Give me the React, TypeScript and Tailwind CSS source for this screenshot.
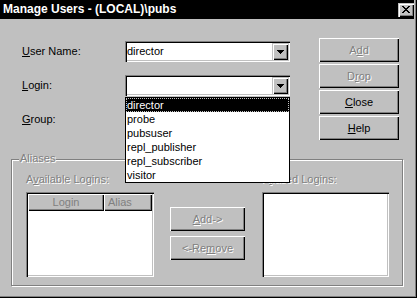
import React from "react";

const raised =
  "shadow-[inset_1px_1px_0_#fff,inset_-1px_-1px_0_#000,inset_-2px_-2px_0_#808080]";
const sunken =
  "shadow-[inset_1px_1px_0_#808080,inset_2px_2px_0_#000,inset_-1px_-1px_0_#fff,inset_-2px_-2px_0_#c0c0c0]";
const scrollBtn =
  "shadow-[inset_1px_1px_0_#c0c0c0,inset_2px_2px_0_#fff,inset_-1px_-1px_0_#000,inset_-2px_-2px_0_#808080]";
const disabled = "text-[#808080] [text-shadow:1px_1px_0_#fff]";

function Btn({
  children,
  off,
  className = "",
}: {
  children: React.ReactNode;
  off?: boolean;
  className?: string;
}) {
  return (
    <div
      className={`flex items-center justify-center bg-[#c0c0c0] leading-[13px] ${raised} ${
        off ? disabled : "text-black"
      } ${className}`}
    >
      {children}
    </div>
  );
}

function Combo({ value }: { value?: string }) {
  return (
    <div className={`flex w-[165px] h-[21px] bg-white p-[2px] ${sunken}`}>
      <div className="flex-1 pl-[0px] leading-[17px] text-black">{value}</div>
      <div
        className={`w-[16px] h-[17px] bg-[#c0c0c0] flex items-center justify-center ${scrollBtn}`}
      >
        <svg width="7" height="4" viewBox="0 0 7 4" shapeRendering="crispEdges">
          <path d="M0 0h7v1H0zM1 1h5v1H1zM2 2h3v1H2zM3 3h1v1H3z" fill="#000" />
        </svg>
      </div>
    </div>
  );
}

function Row({ label, u, rest, children }: { label?: string; u: string; rest: string; children: React.ReactNode }) {
  return (
    <div className="flex items-center h-[21px]">
      <div className="w-[103px] leading-[13px] text-black">
        {label}
        <span className="underline underline-offset-[1px]">{u}</span>
        {rest}
      </div>
      {children}
    </div>
  );
}

export default function App() {
  const items = ["director", "probe", "pubsuser", "repl_publisher", "repl_subscriber", "visitor"];
  return (
    <div
      className="relative w-[417px] h-[298px] overflow-hidden bg-[#c0c0c0] text-[11px] shadow-[inset_-1px_-1px_0_#000,inset_-2px_-2px_0_#808080]"
      style={{ fontFamily: '"Liberation Sans", Arial, sans-serif' }}
    >
      {/* Title bar */}
      <div className="flex items-center w-[414px] h-[19px] bg-black pl-[3px]">
        <div className="flex-1 text-white font-bold text-[12px] leading-[15px]">
          Manage Users - (LOCAL)\pubs
        </div>
        <div className={`w-[16px] h-[14px] bg-[#c0c0c0] flex items-center justify-center ${scrollBtn}`}>
          <svg width="8" height="7" viewBox="0 0 8 7" shapeRendering="crispEdges">
            <path
              d="M0 0h2v1H0zM6 0h2v1H6zM1 1h2v1H1zM5 1h2v1H5zM2 2h4v1H2zM3 3h2v1H3zM2 4h4v1H2zM1 5h2v1H1zM5 5h2v1H5zM0 6h2v1H0zM6 6h2v1H6z"
              fill="#000"
            />
          </svg>
        </div>
      </div>

      {/* Top section */}
      <div className="flex h-[140px]">
        <div className="flex flex-col gap-[13px] pl-[22px] pt-[22px]">
          <Row u="U" rest="ser Name:">
            <Combo value="director" />
          </Row>
          <Row u="L" rest="ogin:">
            <Combo />
          </Row>
          <Row u="G" rest="roup:">
            <Combo />
          </Row>
        </div>
        <div className="flex flex-col gap-[2px] ml-[29px] pt-[19px]">
          <Btn off className="w-[80px] h-[24px]">
            A<span className="underline">d</span>d
          </Btn>
          <Btn off className="w-[80px] h-[24px]">
            D<span className="underline">r</span>op
          </Btn>
          <Btn className="w-[80px] h-[24px]">
            <span className="underline">C</span>lose
          </Btn>
          <Btn className="w-[80px] h-[24px]">
            <span className="underline">H</span>elp
          </Btn>
        </div>
      </div>

      {/* Aliases group */}
      <div className="relative ml-[11px] w-[392px] h-[127px] border border-[#808080] shadow-[inset_1px_1px_0_#fff,1px_1px_0_#fff]">
        <div className={`absolute left-[7px] -top-[8px] px-[1px] bg-[#c0c0c0] leading-[13px] ${disabled}`}>
          Aliases
        </div>
        <div className="flex pl-[14px] pt-[13px]">
          <div className="flex flex-col w-[128px]">
            <div className={`h-[13px] leading-[13px] ${disabled}`}>
              A<span className="underline">v</span>ailable Logins:
            </div>
            <div className={`mt-[6px] h-[85px] bg-white p-[2px] flex flex-col ${sunken}`}>
              <div className="flex h-[17px] shrink-0">
                <div className={`w-[76px] flex items-center justify-center bg-[#c0c0c0] text-[#808080] ${raised}`}>
                  Login
                </div>
                <div className={`flex-1 flex items-center pl-[4px] bg-[#c0c0c0] text-[#808080] ${raised}`}>
                  Alias
                </div>
              </div>
            </div>
          </div>
          <div className="flex flex-col gap-[5px] ml-[16px] w-[75px] pt-[34px]">
            <Btn off className="w-[75px] h-[24px]">
              <span className="underline">A</span>dd-&gt;
            </Btn>
            <Btn off className="w-[75px] h-[24px]">
              &lt;-Re<span className="underline">m</span>ove
            </Btn>
          </div>
          <div className="flex flex-col ml-[17px] w-[127px]">
            <div className={`h-[13px] leading-[13px] ${disabled}`}>
              A<span className="underline">l</span>iased Logins:
            </div>
            <div className={`mt-[6px] h-[85px] bg-white ${sunken}`} />
          </div>
        </div>
      </div>

      {/* Dropdown list overlay */}
      <div className="absolute left-[125px] top-[97px] w-[165px] h-[86px] border border-black bg-white">
        {items.map((it, i) => (
          <div
            key={it}
            className={`h-[14px] leading-[14px] pl-[1px] ${
              i === 0
                ? "bg-black text-white outline-1 outline-dotted outline-[#c0c0c0] -outline-offset-1"
                : "text-black"
            }`}
          >
            {it}
          </div>
        ))}
      </div>
    </div>
  );
}
